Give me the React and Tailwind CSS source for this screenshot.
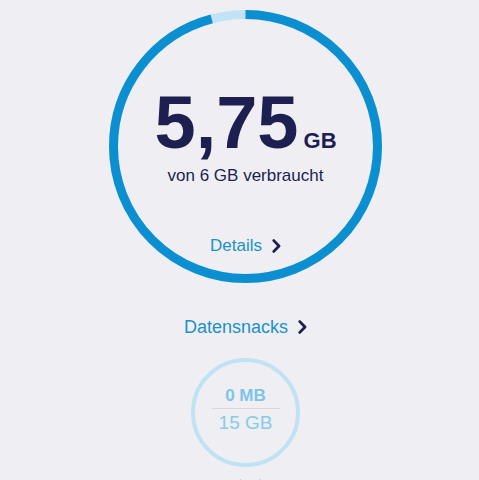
import React from 'react';

const NAVY = '#1c1f4f';

function Chevron() {
  return (
    <svg width="9" height="14" viewBox="0 0 9 14" className="shrink-0">
      <path d="M1.8 1.6 L7 7 L1.8 12.4" fill="none" stroke={NAVY} strokeWidth="2.8" strokeLinecap="round" strokeLinejoin="round" />
    </svg>
  );
}

function UsageRing({ used = 5.75, total = 6 }) {
  const r = 132;
  const c = 2 * Math.PI * r;
  const frac = used / total;
  return (
    <svg width="273" height="273" viewBox="0 0 273 273" className="absolute inset-0">
      <g transform="rotate(-90 136.5 136.5)">
        <circle cx="136.5" cy="136.5" r={r} fill="none" stroke="#c2e3f5" strokeWidth="9" />
        <circle
          cx="136.5"
          cy="136.5"
          r={r}
          fill="none"
          stroke="#0b8fd1"
          strokeWidth="9"
          strokeDasharray={`${c * frac} ${c}`}
        />
      </g>
    </svg>
  );
}

export default function App() {
  return (
    <div
      className="min-h-[480px] h-[480px] overflow-hidden bg-[#efeff3] flex flex-col items-center pl-[12px]"
      style={{ fontFamily: '"Liberation Sans", Arial, sans-serif' }}
    >
      {/* main data ring */}
      <div className="relative mt-[10px] w-[273px] h-[273px] shrink-0 flex flex-col items-center pt-[76px]">
        <UsageRing />
        <div className="relative flex items-baseline">
          <span className="text-[74px] leading-none font-bold" style={{ color: NAVY }}>5,75</span>
          <span className="ml-[5px] text-[22px] leading-none font-bold" style={{ color: NAVY }}>GB</span>
        </div>
        <p className="relative mt-[7px] text-[17px] leading-none" style={{ color: NAVY }}>von 6 GB verbraucht</p>
        <button type="button" className="relative mt-[53px] flex items-center gap-[10px]">
          <span className="text-[17px] leading-none text-[#1d8fcb]">Details</span>
          <Chevron />
        </button>
      </div>

      {/* Datensnacks */}
      <button type="button" className="mt-[35px] flex items-center gap-[10px]">
        <span className="text-[18px] leading-none text-[#1d8fcb]">Datensnacks</span>
        <Chevron />
      </button>

      {/* snack ring */}
      <div className="mt-[22px] w-[109px] h-[109px] shrink-0 rounded-full border-[4px] border-[#bfe2f4] flex flex-col items-center pt-[25px]">
        <span className="text-[17px] leading-none font-bold text-[#7cc5e8]">0 MB</span>
        <div className="mt-[4px] w-[68px] h-px bg-[#d6d8dc]" />
        <span className="mt-[4px] text-[19px] leading-none text-[#86cbea]">15 GB</span>
      </div>

      <p className="mt-[10px] text-[15px] leading-none text-[#c8c9cc]">Flexi</p>
    </div>
  );
}
